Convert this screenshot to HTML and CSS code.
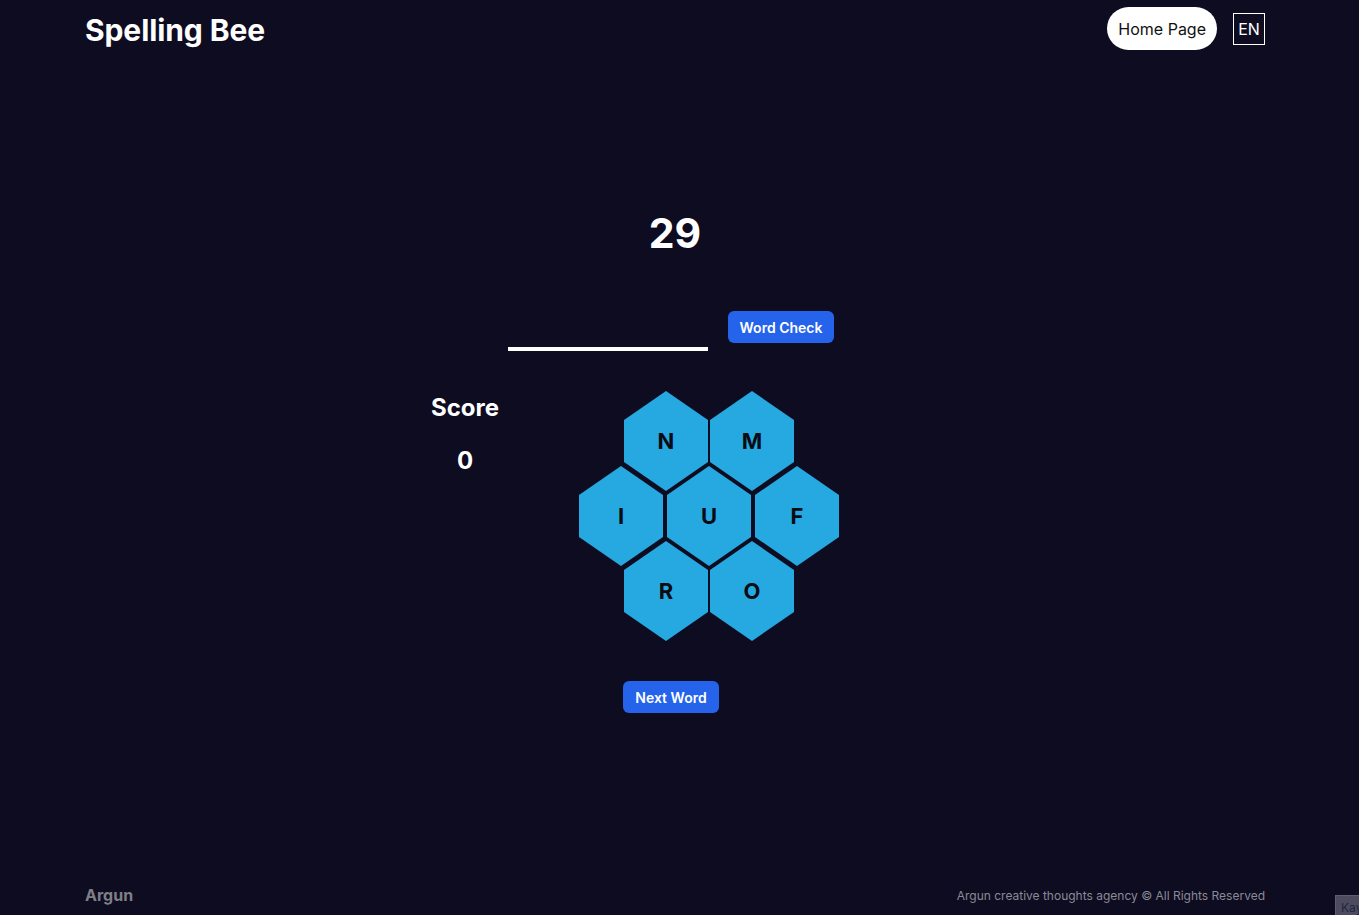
FILE: index.html
```html
<!DOCTYPE html>
<html lang="en">
<head>
<meta charset="utf-8">
<title>Spelling Bee</title>
<link rel="stylesheet" href="styles.css">
</head>
<body>
<div class="page">
  <header class="header container">
    <h1 class="brand">Spelling Bee</h1>
    <nav class="nav">
      <a class="home-btn" href="#">Home Page</a>
      <span class="lang">EN</span>
    </nav>
  </header>

  <main class="main">
    <div class="timer">29</div>

    <div class="word-row">
      <input class="word-input" type="text" aria-label="word">
      <button class="btn">Word Check</button>
    </div>

    <div class="game-row">
      <div class="score">
        <div class="score-title">Score</div>
        <div class="score-value">0</div>
      </div>
      <div class="hive">
        <div class="hive-row narrow">
          <div class="hex">N</div>
          <div class="hex">M</div>
        </div>
        <div class="hive-row wide">
          <div class="hex">I</div>
          <div class="hex">U</div>
          <div class="hex">F</div>
        </div>
        <div class="hive-row narrow">
          <div class="hex">R</div>
          <div class="hex">O</div>
        </div>
      </div>
    </div>

    <div class="next-row">
      <button class="btn">Next Word</button>
    </div>
  </main>

  <footer class="footer container">
    <span class="footer-brand">Argun</span>
    <span class="footer-copy">Argun creative thoughts agency © All Rights Reserved</span>
  </footer>
</div>
<div class="kay">Kay</div>
</body>
</html>
```
FILE: styles.css
```css
* { box-sizing: border-box; }

html, body {
  margin: 0;
  padding: 0;
}

body {
  background: #0e0c21;
  color: #ffffff;
  font-family: Inter, "Noto Sans", "Liberation Sans", sans-serif;
  overflow: hidden;
}

.page {
  min-height: 100vh;
  height: 915px;
  display: flex;
  flex-direction: column;
}

.container {
  margin: 0 94px 0 85px;
  display: flex;
  align-items: center;
  justify-content: space-between;
}

.header {
  height: 57px;
}

.brand {
  margin: 0;
  font-size: 30px;
  font-weight: 700;
  letter-spacing: -0.1px;
  line-height: 1;
  padding-top: 2px;
}

.nav {
  display: flex;
  align-items: center;
  gap: 16px;
}

.home-btn {
  display: flex;
  align-items: center;
  height: 43px;
  padding: 0 11px;
  background: #ffffff;
  color: #111111;
  border-radius: 22px;
  font-size: 16px;
  text-decoration: none;
}

.lang {
  display: flex;
  align-items: center;
  justify-content: center;
  width: 32px;
  height: 32px;
  border: 1px solid #ffffff;
  font-size: 16px;
}

.main {
  flex: 1;
  display: flex;
  flex-direction: column;
  padding-right: 17px;
}

.timer {
  margin-top: 152px;
  text-align: center;
  font-size: 41px;
  font-weight: 700;
  line-height: 48px;
  padding-left: 8px;
}

.word-row {
  margin-top: 54px;
  display: flex;
  justify-content: center;
  align-items: flex-start;
  gap: 20px;
}

.word-input {
  width: 200px;
  height: 40px;
  background: transparent;
  border: none;
  border-bottom: 4px solid #ffffff;
  color: #ffffff;
  font-size: 18px;
  outline: none;
  padding: 0 4px;
}

.btn {
  height: 32px;
  padding: 0 12px;
  border: none;
  border-radius: 6px;
  background: #2563eb;
  color: #ffffff;
  font-family: Inter, "Noto Sans", "Liberation Sans", sans-serif;
  font-size: 14px;
  font-weight: 600;
  cursor: pointer;
}

.game-row {
  margin-top: 40px;
  display: flex;
  justify-content: center;
  align-items: flex-start;
  gap: 64px;
  padding-right: 88px;
}

.score {
  width: 100px;
  margin-top: 1px;
  display: flex;
  flex-direction: column;
  align-items: center;
  gap: 21px;
}

.score-title,
.score-value {
  font-size: 24px;
  font-weight: 700;
  line-height: 32px;
}

.hive {
  display: flex;
  flex-direction: column;
  align-items: center;
  width: 260px;
}

.hive-row {
  display: flex;
}

.hive-row.narrow { gap: 2px; }
.hive-row.wide { gap: 4px; }

.hive-row + .hive-row {
  margin-top: -25px;
}

.hex {
  width: 84px;
  height: 100px;
  background: #26a8e0;
  clip-path: polygon(50% 0, 100% 29%, 100% 71%, 50% 100%, 0 71%, 0 29%);
  display: flex;
  align-items: center;
  justify-content: center;
  color: #0b0b14;
  font-size: 22px;
  font-weight: 700;
}

.next-row {
  margin-top: 40px;
  display: flex;
  justify-content: center;
}

.footer {
  height: 40px;
}

.footer-brand {
  font-size: 16px;
  font-weight: 700;
  color: #7f7f86;
}

.footer-copy {
  font-size: 12px;
  color: #8a8a95;
}

.kay {
  position: fixed;
  left: 1335px;
  top: 895px;
  width: 40px;
  height: 24px;
  background: #4d4b5f;
  border: 1px solid #5e5c70;
  color: #1d2740;
  font-size: 12px;
  padding: 6px 0 0 5px;
  line-height: 1;
}
```
